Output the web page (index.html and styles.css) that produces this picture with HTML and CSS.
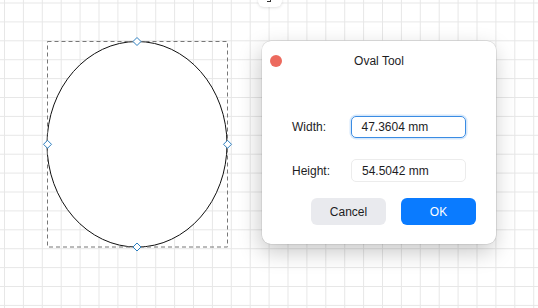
FILE: index.html
```html
<!DOCTYPE html>
<html>
<head>
<meta charset="utf-8">
<link rel="stylesheet" href="styles.css">
</head>
<body>
<div class="canvas">
  <svg class="drawing" width="538" height="308" viewBox="0 0 538 308">
    <defs>
      <pattern id="grid" x="4" y="2.5" width="18.9" height="18.9" patternUnits="userSpaceOnUse">
        <path d="M0.5 0V18.9M0 0.5H18.9" stroke="#e7e7e7" stroke-width="1" fill="none"/>
      </pattern>
    </defs>
    <rect width="538" height="308" fill="url(#grid)"/>
    <ellipse cx="137" cy="144.3" rx="90" ry="102.8" fill="#fff" stroke="#111" stroke-width="1"/>
    <rect x="47.5" y="41.5" width="180" height="205.5" fill="none" stroke="#777" stroke-width="1" stroke-dasharray="4 3"/>
    <g fill="#fff" stroke="#2d7fc0" stroke-width="1">
      <path d="M137 37.5L141 41.5L137 45.5L133 41.5Z"/>
      <path d="M47.5 140.3L51.5 144.3L47.5 148.3L43.5 144.3Z"/>
      <path d="M227.5 140.3L231.5 144.3L227.5 148.3L223.5 144.3Z"/>
      <path d="M137 243L141 247L137 251L133 247Z"/>
    </g>
  </svg>
  <div class="toolbar-tab"><span class="tab-mark"></span></div>
  <div class="dialog">
    <div class="dialog-header">
      <span class="close-dot"></span>
      <span class="dialog-title">Oval Tool</span>
    </div>
    <div class="dialog-body">
      <div class="field-row">
        <label class="field-label">Width:</label>
        <div class="field-input focused">47.3604 mm</div>
      </div>
      <div class="field-row">
        <label class="field-label">Height:</label>
        <div class="field-input">54.5042 mm</div>
      </div>
      <div class="button-row">
        <button class="btn btn-cancel">Cancel</button>
        <button class="btn btn-ok">OK</button>
      </div>
    </div>
  </div>
</div>
</body>
</html>
```

FILE: styles.css
```css
html, body {
  margin: 0;
  padding: 0;
  background: #fff;
  font-family: "Liberation Sans", Arial, sans-serif;
  color: #1d1d1f;
}

.canvas {
  position: relative;
  width: 538px;
  height: 308px;
  overflow: hidden;
}

.drawing {
  display: block;
}

.toolbar-tab {
  position: absolute;
  left: 258px;
  top: -10px;
  width: 24px;
  height: 17px;
  background: #fff;
  border-radius: 6px;
  box-shadow: 0 1px 3px rgba(0, 0, 0, 0.12);
}

.tab-mark {
  position: absolute;
  left: 9px;
  top: 9px;
  width: 3px;
  height: 2px;
  border-right: 1px solid #333;
  border-bottom: 1px solid #333;
}

.dialog {
  position: absolute;
  left: 262px;
  top: 41px;
  width: 234px;
  height: 203px;
  background: #fff;
  border-radius: 9px;
  box-shadow: 0 0 0 0.5px rgba(0, 0, 0, 0.12), -2px 8px 22px rgba(0, 0, 0, 0.22);
  display: flex;
  flex-direction: column;
}

.dialog-header {
  position: relative;
  height: 40px;
  display: flex;
  align-items: center;
  justify-content: center;
}

.close-dot {
  position: absolute;
  left: 8px;
  top: 14px;
  width: 12px;
  height: 12px;
  border-radius: 50%;
  background: #ec6a5e;
}

.dialog-title {
  font-size: 12px;
  color: #1d1d1f;
}

.dialog-body {
  display: flex;
  flex-direction: column;
  padding-top: 35px;
}

.field-row {
  display: flex;
  align-items: center;
  height: 22px;
  margin-bottom: 21px;
}

.field-row + .field-row {
  height: 23px;
  margin-bottom: 16px;
}

.field-label {
  width: 59px;
  padding-left: 30px;
  font-size: 12px;
  color: #1d1d1f;
}

.field-input {
  box-sizing: border-box;
  width: 115px;
  height: 100%;
  border: 1px solid #ececec;
  border-radius: 5px;
  padding-left: 10px;
  font-size: 12px;
  display: flex;
  align-items: center;
  color: #1d1d1f;
}

.field-input.focused {
  border: 1.5px solid #3b8ce3;
  box-shadow: 0 0 0 1.5px #d6e8fb;
  padding-left: 9.5px;
}

.button-row {
  display: flex;
  justify-content: flex-end;
  gap: 15px;
  padding-right: 20px;
}

.btn {
  width: 75px;
  height: 27px;
  border: none;
  border-radius: 6px;
  font-family: "Liberation Sans", Arial, sans-serif;
  font-size: 12px;
  padding: 0;
}

.btn-cancel {
  background: #e9eaee;
  color: #1d1d1f;
}

.btn-ok {
  background: #0a7bff;
  color: #fff;
}
```
